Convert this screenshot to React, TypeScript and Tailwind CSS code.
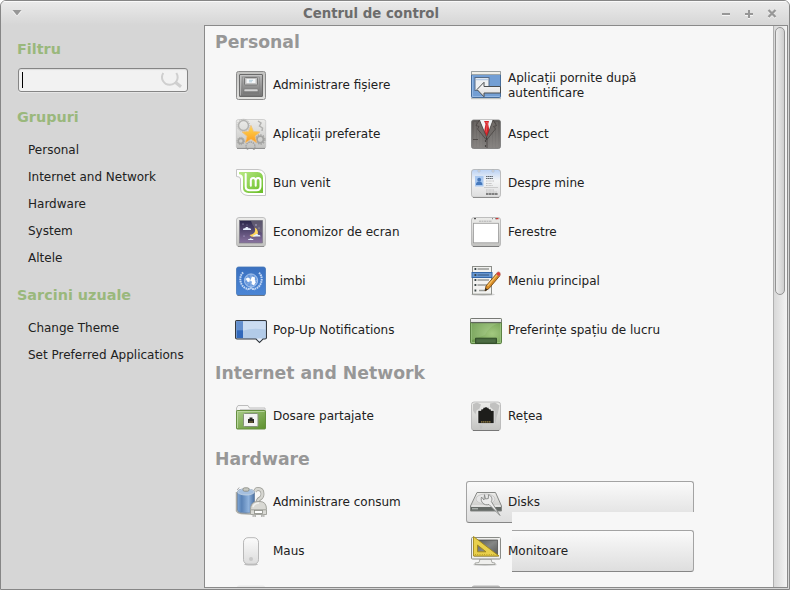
import type { ReactNode } from "react";

const Icon = ({ children }: { children: ReactNode }) => (
  <svg viewBox="0 0 32 32" className="h-8 w-8 shrink-0">{children}</svg>
);

const Gradients = () => (
  <svg className="absolute h-0 w-0">
    <defs>
      <linearGradient id="silver" x1="0" y1="0" x2="0" y2="1"><stop offset="0" stopColor="#ececea" /><stop offset="1" stopColor="#c3c3c1" /></linearGradient>
      <linearGradient id="frame" x1="0" y1="0" x2="0" y2="1"><stop offset="0" stopColor="#c2c2c0" /><stop offset="1" stopColor="#e2e2e0" /></linearGradient>
      <linearGradient id="steel" x1="0" y1="0" x2="0" y2="1"><stop offset="0" stopColor="#b8b8b8" /><stop offset="1" stopColor="#747474" /></linearGradient>
      <linearGradient id="star" x1="0" y1="0" x2="0" y2="1"><stop offset="0" stopColor="#ffda50" /><stop offset="1" stopColor="#fb9b22" /></linearGradient>
      <linearGradient id="mint" x1="0" y1="0" x2="1" y2="1"><stop offset="0" stopColor="#b9e985" /><stop offset="1" stopColor="#69be27" /></linearGradient>
      <linearGradient id="night" x1="0" y1="0" x2="0" y2="1"><stop offset="0" stopColor="#29264a" /><stop offset="1" stopColor="#8a73a0" /></linearGradient>
      <linearGradient id="blue" x1="0" y1="0" x2="0" y2="1"><stop offset="0" stopColor="#3a70bf" /><stop offset="1" stopColor="#4b86d6" /></linearGradient>
      <linearGradient id="green" x1="0" y1="0" x2="1" y2="1"><stop offset="0" stopColor="#a8cc86" /><stop offset="1" stopColor="#5c8f2c" /></linearGradient>
      <radialGradient id="desk" cx=".7" cy=".6" r=".75"><stop offset="0" stopColor="#a3c980" /><stop offset="1" stopColor="#669548" /></radialGradient>
      <linearGradient id="suit" x1="0" y1="0" x2="0" y2="1"><stop offset="0" stopColor="#5c5856" /><stop offset="1" stopColor="#858280" /></linearGradient>
      <linearGradient id="card" x1="0" y1="0" x2="0" y2="1"><stop offset="0" stopColor="#b9d1f4" /><stop offset=".4" stopColor="#f4f5f6" /><stop offset="1" stopColor="#dddddd" /></linearGradient>
      <linearGradient id="tank" x1="0" y1="0" x2="1" y2="0"><stop offset="0" stopColor="#7ba4d4" /><stop offset=".25" stopColor="#5982b6" /><stop offset=".65" stopColor="#8fb2dc" /><stop offset="1" stopColor="#4a70a2" /></linearGradient>
      <linearGradient id="pale" x1="0" y1="0" x2="0" y2="1"><stop offset="0" stopColor="#fbfbfb" /><stop offset="1" stopColor="#dcdcdc" /></linearGradient>
      <linearGradient id="screen" x1="0" y1="0" x2="1" y2="1"><stop offset="0" stopColor="#555755" /><stop offset=".5" stopColor="#858785" /><stop offset="1" stopColor="#555755" /></linearGradient>
    </defs>
  </svg>
);

const CabinetIcon = () => (
  <Icon>
    <rect x="1.5" y="2.5" width="29" height="28" rx="2" fill="url(#frame)" stroke="#8c8c8c" />
    <rect x="4.5" y="5.5" width="23" height="22" rx=".5" fill="url(#steel)" stroke="#6a6a6a" />
    <path d="M5.5 26.5V6.5H26.5" fill="none" stroke="#c8c8c8" strokeWidth=".7" />
    <rect x="7.5" y="8" width="17" height="17" fill="url(#steel)" stroke="#888" strokeWidth=".6" />
    <rect x="9.5" y="8.5" width="13" height="7.5" rx=".8" fill="#c3c3c3" stroke="#777" />
    <rect x="11.5" y="10" width="9" height="4" fill="#f4f6f8" /><path d="M14 11.3h4M14 12.8h3" stroke="#a5c3d2" strokeWidth=".8" />
    <rect x="9" y="20" width="14" height="2.6" rx="1" fill="#d2d2d2" stroke="#777" strokeWidth=".5" />
  </Icon>
);
const StarIcon = () => (
  <Icon>
    <rect x="1.3" y="1.5" width="29.4" height="29" rx="2" fill="url(#silver)" stroke="#bbb" strokeWidth=".6" />
    <path d="M2.5 30.4h27" stroke="#8c8c8c" />
    <g fill="none" stroke="#b2b2b0">
      <circle cx="8.5" cy="7.5" r="5" strokeWidth="1.5" /><circle cx="8.5" cy="7.5" r="6.3" strokeWidth=".8" strokeDasharray="1 1" />
      <g stroke="#a3a3a1"><circle cx="25.2" cy="21.500" r="3.300" strokeWidth="1.800" /><circle cx="25.200" cy="21.500" r="4.700" strokeWidth="1.200" strokeDasharray="1.500 1.200" /><circle cx="5.800" cy="23" r="2.500" strokeWidth="1.500" /><circle cx="5.800" cy="23" r="3.700" strokeWidth="1" strokeDasharray="1.200 1" /><circle cx="15.500" cy="28.500" r="4.500" strokeWidth="1.400" strokeDasharray="1.500 .8" /></g>
      <path d="M23 3l3 2-1.500 3 3 2-.5 3" strokeWidth="1.500" />
    </g>
    <path d="M2 30.500h28" stroke="#929292" />
    <path d="M16 7.5l2.500 6 6.500.500-5 4.200 1.600 6.500-5.600-3.500-5.600 3.500 1.600-6.500L7 14l6.500-.500z" fill="url(#star)" stroke="#f0c07c" strokeWidth=".8" />
  </Icon>
);
const MintIcon = () => (
  <Icon>
    <path d="M1.5 2.5H23Q30.5 3 30.5 11V28.5H13Q6 28 5.5 22V12Q5.5 9.5 1.5 9.5z" fill="#fff" stroke="#c4c4c4" />
    <path d="M4 5H22.5Q28 5.5 28 11V26H13.5Q8 25.5 8 21V11Q8 7.5 4 7.2z" fill="url(#mint)" />
    <path d="M10.700 7v12.500q0 3.800 4 3.800h6.800q4 0 4-4v-5.500q0-2.700-2.400-2.700t-2.400 2.700v5M20.700 13.800q0-2.700-2.500-2.700t-2.400 2.700v5" fill="none" stroke="#fff" strokeWidth="2" strokeLinecap="round" />
  </Icon>
);
const NightIcon = () => (
  <Icon>
    <rect x="1.5" y="1.5" width="29" height="29" rx="2.5" fill="url(#silver)" stroke="#b5b5b5" strokeWidth=".8" />
    <path d="M3 30.5h26" stroke="#8c8c8c" />
    <rect x="4.5" y="4.5" width="23" height="22.5" fill="url(#night)" stroke="#77757e" strokeWidth=".6" />
    <path d="M16 5h11v12Q18 13 16 5" fill="#777080" opacity=".65" />
    <path d="M19.5 11.5c2 4-1 7.3-5 7.4 3.500 4.200 9.300.8 8.300-3.300-.4-2-1.300-3.300-3.300-4.100z" fill="#ffd65c" />
    <g fill="#e4edfa"><path d="M8 14c0-1.500 1-1.800 2-1.600.5-2 3.300-2 3.700 0 1.500-.3 2.400.3 2.300 1.600zM18 20.500c.2-1.300 1-1.500 2-1.400.5-1.600 3-1.500 3.400 0 1.200-.1 2.200.3 2 1.400zM13 24c.1-1 .9-1.100 1.500-1 .5-1.200 2-1.100 2.400 0 .8-.1 1.600.1 1.500 1z" /></g>
    <g fill="#c9c8e8"><circle cx="8" cy="8" r=".6" /><circle cx="21" cy="9" r=".7" /><circle cx="24" cy="12" r=".5" /><circle cx="9" cy="20" r=".6" /><circle cx="12" cy="9" r=".4" /></g>
  </Icon>
);
const UnIcon = () => (
  <Icon>
    <rect x="1.500" y="2" width="29" height="28.300" rx="2" fill="url(#blue)" stroke="#4577b8" strokeWidth=".8" /><path d="M2.500 30.500h27" stroke="#6d7785" />
    <circle cx="16" cy="15.500" r="6.600" fill="#6797db" stroke="#bfd5f5" strokeWidth=".8" />
    <path d="M9.500 15.500h13M16 9v13M11.500 11l9 9M20.500 11l-9 9" stroke="#a9c6ef" strokeWidth=".6" />
    <path d="M10 14l3-1.500 2 1.200-.5 3-2 .2-.5-1.600zM17 11.500l3 1-.2 2.400 1 2.500-2 3-2.300-1.300.5-2.500-1.800-.8z" fill="#fff" />
    <path d="M8.200 7.500C3.800 11 4.500 19.500 9.700 22.700c2 1.500 5 1.500 6.300.5 1.300 1 4.300 1 6.300-.5C27.500 19.500 28.200 11 23.800 7.500" fill="none" stroke="#c5d9f5" strokeWidth="2" strokeDasharray="1.600 .7" />
    <path d="M12 25l4-2 4 2" fill="none" stroke="#bcd4f5" strokeWidth=".8" />
  </Icon>
);
const BubbleIcon = () => (
  <Icon>
    <path d="M2 6.500h28q1.500 0 1.500 1.500v15.500q0 1.500-1.500 1.500h-2l-3.500 3.500-3.500-3.500H2q-1.500 0-1.500-1.500V8q0-1.500 1.500-1.500z" fill="#b2cbe8" stroke="#35393e" strokeWidth="1.100" />
    <path d="M1.500 7.500h29v8q-13-2-22 1h-7z" fill="#cbdcf1" />
    <path d="M1.500 7.500h6.500V24H1.500z" fill="#3168bb" /><path d="M1.500 7.500h6.500v8.800H1.500z" fill="#638fce" />
    <path d="M21.500 24.500h6l-3 3z" fill="#e7edf5" />
  </Icon>
);
const StartupIcon = () => (
  <Icon>
    <rect x="1.500" y="2.500" width="29" height="26" rx=".8" fill="#739fd4" stroke="#466d9b" />
    <path d="M1.500 2.500h29V5.500h-29z" fill="#efefe9" stroke="#999a91" strokeWidth=".7" />
    <path d="M2.500 7v20.500h27" fill="none" stroke="#94b8e3" /><path d="M1 29.700h30" stroke="#b4b8b4" />
    <rect x="5" y="8.500" width="14" height="13" fill="#edf0f2" stroke="#566c87" /><path d="M6 10.500h12" stroke="#b7cce5" strokeWidth="1.500" />
    <path d="M7 20.500l7-7.200v4.200H30.500V24H14v3.800z" fill="url(#pale)" stroke="#4a4e50" />
  </Icon>
);
const SuitIcon = () => (
  <Icon>
    <rect x="1.500" y="2" width="29" height="28.500" rx="2" fill="url(#suit)" stroke="#777" strokeWidth=".8" />
    <path d="M5 4v25M8 4v25M11 15v15M21 15v15M24 5v25M27 4v25" stroke="#96918d" strokeWidth=".45" />
    <path d="M9.500 2h13.500L17 20z" fill="#f2f4f6" />
    <path d="M14 3h5l-.8 3 1.500 8-2.700 5-3-5 1.500-8z" fill="#d4242a" /><path d="M15.500 4.500h2l-1.500 10" fill="none" stroke="#ee6062" strokeWidth=".8" />
    <path d="M9.500 2L6 7.500l3 1-1.500 2.500L16.500 22V19zM23 2l3.500 5.500-3 1 2 2.500L17 21.500l-.5-2z" fill="#716c69" stroke="#3c3836" strokeWidth=".6" />
    <path d="M17 20v10M3 21.500h5" stroke="#3c3836" strokeWidth=".7" /><circle cx="15.500" cy="23" r=".7" fill="#292624" /><circle cx="15.500" cy="28" r=".7" fill="#292624" />
  </Icon>
);
const ProfileIcon = () => (
  <Icon>
    <rect x="1.500" y="2.500" width="29" height="27.800" rx="2.500" fill="url(#card)" stroke="#b0b0b0" strokeWidth=".8" /><path d="M3 30.500h26" stroke="#8c8c8c" />
    <circle cx="9" cy="4" r="1.100" fill="#ededed" stroke="#9ba5b1" strokeWidth=".5" /><circle cx="23" cy="4" r="1.100" fill="#ededed" stroke="#9ba5b1" strokeWidth=".5" />
    <rect x="5" y="9" width="8.500" height="10.500" fill="#a9c8f0" /><circle cx="9.200" cy="12.700" r="1.900" fill="#4777b8" /><path d="M6 18q-.2-3.500 3.200-3.500t3.200 3.500z" fill="#4779bc" />
    <path d="M16 9.500h7M16 11.500h7" stroke="#555b61" strokeWidth=".9" strokeDasharray="1.500 .3" /><path d="M16 14h8M16 16.500h6M16 18.500h7M16 23h8M16 25h11" stroke="#b5b5b5" strokeWidth=".8" strokeDasharray="1 .4" /><path d="M14 20.500h14" stroke="#aaa" strokeWidth=".5" /><path d="M16 27h12" stroke="#606060" strokeWidth="1.700" strokeDasharray="2.500 .4" />
  </Icon>
);
const WindowIcon = () => (
  <Icon>
    <rect x="1.500" y="1.500" width="29" height="29" rx="2.500" fill="url(#silver)" stroke="#b0b0b0" strokeWidth=".8" /><path d="M3 30.500h26" stroke="#7c7c7c" />
    <path d="M4 2.700h2" stroke="#555" strokeWidth="1.200" /><path d="M22 2.700h1M25 2.700h2" stroke="#777" /><path d="M26 2.700h2.500" stroke="#cd3b38" strokeWidth="1.200" /><path d="M9 5.200h13" stroke="#b0b0b0" strokeDasharray="2 .5" />
    <rect x="3.500" y="7.300" width="25" height="19.500" fill="#fff" stroke="#999" strokeWidth=".8" />
  </Icon>
);
const MenuIcon = () => (
  <Icon>
    <ellipse cx="13" cy="29.500" rx="12" ry="1.400" fill="#bbb" opacity=".6" />
    <rect x="2.500" y="1.500" width="19" height="27.700" fill="#f2f2f0" stroke="#8d8f8a" />
    <rect x="2" y="7.500" width="20" height="5" fill="#6898d3" stroke="#3466a5" />
    <path d="M4.500 4h1.800M4.500 10h1.800M4.500 15h1.800M4.500 20h1.800M4.500 25.500h1.800" stroke="#3b4445" strokeWidth="1.800" /><path d="M7.500 4H19M7.500 15H19M7.500 20H19M9 25.500h6" stroke="#999b97" strokeWidth="1.500" /><path d="M7.500 10H19" stroke="#496b96" strokeWidth="1.500" />
    <path d="M15 26l1-5L27 8l3 2.500L19 23.500z" fill="#d88c25" stroke="#754a16" strokeWidth=".9" /><path d="M17.500 21L27 9.800" stroke="#f5bf61" strokeWidth="1.300" /><path d="M26 9l1.500-2q3-.8 3 2.500L29 11.500z" fill="#df3e36" stroke="#b99b91" strokeWidth=".5" /><path d="M15 26l.6-3 2 1.800z" fill="#222" />
  </Icon>
);
const DesktopIcon = () => (
  <Icon>
    <rect x=".6" y="4.600" width="30.800" height="25" rx="1" fill="url(#desk)" stroke="#4f7736" />
    <path d="M1.500 9v19.500h29V9" fill="none" stroke="#9dc584" strokeWidth=".8" />
    <path d="M2 9h28Q20 11 15 21L2 26z" fill="#b8d79f" opacity=".25" />
    <rect x=".5" y="4.500" width="31" height="4" rx="1" fill="url(#pale)" stroke="#777975" /><path d="M1 8.700h30" stroke="#5c6358" />
    <path d="M5.500 29.500v-5.300h21v5.300z" fill="#3e5a34" stroke="#34502b" /><path d="M6.500 25.200h19v3.300h-19z" fill="#4c6c43" />
  </Icon>
);
const FolderIcon = () => (
  <Icon>
    <path d="M1.500 13V8l1.500-2.500h10L14.500 8h15.500v5z" fill="#f5f5f5" stroke="#bdbdbd" />
    <path d="M5 9.500h24" stroke="#ccc" />
    <rect x="1.500" y="10.500" width="29" height="18.500" rx=".7" fill="url(#green)" stroke="#658f3f" /><path d="M2.500 28V11.500h27" fill="none" stroke="#c1dba8" strokeWidth=".8" />
    <rect x="8.500" y="13.500" width="14.500" height="13" rx="1" fill="#f3f3f2" stroke="#85927b" />
    <path d="M13 23v-4h1.500V17.500h3V19H19v4z" fill="#292a26" /><path d="M14 22h4" stroke="#a98f44" strokeWidth=".8" />
  </Icon>
);
const EthernetIcon = () => (
  <Icon>
    <rect x="1.500" y="2" width="29" height="28.500" rx="2.500" fill="url(#silver)" stroke="#b3b3b3" strokeWidth=".8" /><path d="M3 30.500h26" stroke="#777" />
    <path d="M3 4l4-1.500 4 2-1.500 4-3 2-1 4-2.500-4zM20 3.500l5-1 4.500 3-1.500 7-1.500 5-1 6-2-1V10l-3.500-3zM9.500 25l3 .8-.8 3-1.500 1z" fill="#c1c1c0" />
    <path d="M8 23.500V10.500h3V9h2V7.500h1.500V7h3v.8H19V9h2v1.500h3v13z" fill="#1d1d1b" stroke="#f1f1f1" strokeWidth=".6" />
    <path d="M11 21.800h10" stroke="#76663a" strokeWidth="1.800" strokeDasharray="1.500 .5" />
  </Icon>
);
const PowerIcon = () => (
  <Icon>
    <path d="M20 6q.5-3 3-3 4.500 0 4.500 5 0 3-2.500 4.500-2.500 1.500-2.500 4" fill="none" stroke="#989993" strokeWidth="3.800" /><path d="M20 6q.5-3 3-3 4.500 0 4.500 5 0 3-2.500 4.500-2.500 1.500-2.500 4" fill="none" stroke="#d6d6d1" strokeWidth="2.400" />
    <path d="M1.500 6v19q1 2 4.500 2.500l9 .5" fill="none" stroke="#aaaaa4" strokeWidth="1.500" />
    <path d="M2.500 6q0-3 8-3t9 3v18q0 3-8.500 3t-8.500-3z" fill="url(#tank)" stroke="#6a81a0" strokeWidth=".8" />
    <ellipse cx="11" cy="6" rx="8.300" ry="3" fill="#a5bfdf" stroke="#d3dce4" strokeWidth=".7" /><path d="M2.200 4l2-2.500" stroke="#aaa" /><rect x="8" y="1.800" width="6" height="3.400" rx="1.500" fill="#c8c9c1" stroke="#85877e" strokeWidth=".8" />
    <path d="M15.500 28.500v-5q0-8 7.500-8h2q6.500 0 6.500 8v5z" fill="#d9d9d4" stroke="#9b9c95" strokeWidth=".9" /><path d="M18 21q1-4 6-4" fill="none" stroke="#f2f2ef" strokeWidth="1.500" />
    <path d="M16 23.800h15" stroke="#92938c" strokeWidth=".8" /><rect x="19.500" y="24.500" width="8" height="3" fill="#fff" stroke="#888982" strokeWidth=".8" /><path d="M18 31v-2h2.500v2M26.500 31v-2H29v2" fill="#ccc" stroke="#b5b5b0" />
  </Icon>
);
const MouseIcon = () => (
  <Icon><ellipse cx="16" cy="29.300" rx="7" ry="1.300" fill="#bbb" /><rect x="8.500" y="2.700" width="15" height="26.500" rx="4.500" fill="url(#pale)" stroke="#b8b8b8" /><circle cx="16" cy="24" r="2" fill="#c8c8c8" /></Icon>
);
const DiskIcon = () => (
  <Icon>
    <path d="M7 6.500h18.500L31.500 20v5H.5v-5z" fill="url(#silver)" stroke="#868886" /><path d="M1 21h30v3.800H1z" fill="#656a67" /><path d="M2 22.800h6" stroke="#c4cac6" /><path d="M1.500 20h29" stroke="#f6f6f6" />
    <ellipse cx="15.500" cy="13" rx="9.500" ry="5" fill="#e6e6e6" stroke="#c9c9c9" />
    <path d="M14.500 8.700l1 4.300 2.800-.5.200-3.800c3.500 1.300 4 4.500 2.800 6.800L30 29.500l-11-11c-5 1.500-9-2.500-7.500-7.500l2.500 3z" fill="#ebebeb" stroke="#858785" strokeWidth=".9" />
  </Icon>
);
const MonitorIcon = () => (
  <Icon>
    <ellipse cx="15" cy="29.700" rx="12" ry="1.200" fill="#ccc" /><path d="M10 24h11l1 3.500 3 .5v1.500H5V28l4-.5z" fill="#efefed" stroke="#999a96" strokeWidth=".8" />
    <rect x="1.500" y="2.500" width="29" height="21.500" rx="1" fill="#f1f1ef" stroke="#8a8c88" /><rect x="4.500" y="5" width="23" height="16" fill="url(#screen)" stroke="#444" strokeWidth=".7" />
    <path d="M3.500 1.500v19.500h25.500zM7.500 10l8.500 6.800h-8.500z" fill="#e9d04c" fillRule="evenodd" stroke="#a28817" strokeWidth=".9" /><path d="M5 19.500h20" stroke="#b49924" strokeDasharray=".8 1.500" />
  </Icon>
);
const PlateIcon = ({ tone }: { tone: string }) => (
  <Icon><rect x="2" y="2" width="28" height="28" rx="2" fill={tone} stroke={tone} /></Icon>
);

type Entry = { label: ReactNode; icon: ReactNode; plate?: string };

const sections: { title: string; entries: Entry[] }[] = [
  {
    title: "Personal",
    entries: [
      { label: "Administrare fișiere", icon: <CabinetIcon /> },
      { label: <span className="block pt-0.5">Aplicații pornite după<br />autentificare</span>, icon: <StartupIcon /> },
      { label: "Aplicații preferate", icon: <StarIcon /> },
      { label: "Aspect", icon: <SuitIcon /> },
      { label: "Bun venit", icon: <MintIcon /> },
      { label: "Despre mine", icon: <ProfileIcon /> },
      { label: "Economizor de ecran", icon: <NightIcon /> },
      { label: "Ferestre", icon: <WindowIcon /> },
      { label: "Limbi", icon: <UnIcon /> },
      { label: "Meniu principal", icon: <MenuIcon /> },
      { label: "Pop-Up Notifications", icon: <BubbleIcon /> },
      { label: "Preferințe spațiu de lucru", icon: <DesktopIcon /> },
    ],
  },
  {
    title: "Internet and Network",
    entries: [
      { label: "Dosare partajate", icon: <FolderIcon /> },
      { label: "Rețea", icon: <EthernetIcon /> },
    ],
  },
  {
    title: "Hardware",
    entries: [
      { label: "Administrare consum", icon: <PowerIcon /> },
      { label: "Disks", icon: <DiskIcon />, plate: "[clip-path:polygon(0_0,100%_0,100%_31px,46px_31px,46px_100%,0_100%)]" },
      { label: "Maus", icon: <MouseIcon /> },
      { label: "Monitoare", icon: <MonitorIcon />, plate: "[clip-path:inset(0_0_0_46px)]" },
      { label: "", icon: <PlateIcon tone="#e9e9e9" /> },
      { label: "", icon: <PlateIcon tone="#b4b4b4" /> },
    ],
  },
];

const Launcher = ({ label, icon, plate }: Entry) => (
  <div className="relative flex h-[42px] items-center pl-1">
    {plate && (
      <div className={`absolute inset-0 rounded-[3px] border border-[#a3a3a3] border-b-[#868686] bg-linear-to-b from-[#fafafa] to-[#dedede] ${plate}`} />
    )}
    <div className="relative flex items-center gap-1.5">
      {icon}
      <span className="whitespace-nowrap leading-[15px]">{label}</span>
    </div>
  </div>
);

const SideTitle = ({ children }: { children: ReactNode }) => (
  <h2 className="h-5 pl-4 text-[14.4px] leading-5 font-bold text-[#9ab87c]">{children}</h2>
);

const SideList = ({ items }: { items: string[] }) => (
  <ul className="pl-[27px]">
    {items.map((item) => <li key={item} className="h-[27px] leading-[27px] whitespace-nowrap">{item}</li>)}
  </ul>
);

export default function App() {
  return (
    <div className="flex h-[590px] w-[790px] flex-col overflow-hidden rounded-t-md border border-[#868686] bg-[#d6d6d6] font-['DejaVu_Sans',sans-serif] text-[12px] text-[#212121]">
      <Gradients />
      <header className="flex h-6 shrink-0 items-center bg-linear-to-b from-[#ebebeb] to-[#d6d6d6] pr-[11px] pl-[11px] shadow-[inset_0_1px_0_#fafafa]">
        <svg className="h-6 w-[10px]" viewBox="0 0 10 24"><path d="M0 10h10L5 15.500z" fill="#f5f5f5" /><path d="M.5 9h9L5 14.500z" fill="#979797" /></svg>
        <h1 className="flex-1 pt-0.5 pl-[46px] text-center text-[13.3px] leading-6 font-bold text-[#6c6c6c] -ml-[47px]">Centrul de control</h1>
        <svg className="h-6 w-[57px]" viewBox="0 0 57 24" fill="none">
          <g stroke="#f5f5f5" strokeWidth="2"><path d="M1 14h8M24 14h8M28 10v8M47.500 10l7 7M54.500 10l-7 7" /></g>
          <g stroke="#979797" strokeWidth="2"><path d="M1 13h8M24 13h8M28 9v8" /><path d="M47.500 9l7 7M54.500 9l-7 7" strokeWidth="2.300" /></g>
        </svg>
      </header>
      <div className="flex min-h-0 flex-1">
        <aside className="w-[203px] shrink-0 pt-[14px]">
          <SideTitle>Filtru</SideTitle>
          <div className="mt-[9px] ml-[17px] flex h-6 w-[170px] items-center justify-between rounded-[3px] border border-[#858585] bg-[#f2f2f2] pr-1 pl-[3px] shadow-[inset_0_1px_1px_#dcdcdc,0_1px_0_#e6e6e6]">
            <span className="h-4 w-px bg-black" />
            <svg className="h-[18px] w-[22px]" viewBox="0 0 22 18" fill="none" stroke="#cfcfcf">
              <path d="M2.300 2C-1.200 7.500 3 14 9 13.700 15.500 13.500 18.500 7 15.300 2" strokeWidth="2" /><path d="M14 11l6 4.700" strokeWidth="3.200" />
            </svg>
          </div>
          <div className="mt-[15px]"><SideTitle>Grupuri</SideTitle></div>
          <div className="mt-2.5"><SideList items={["Personal", "Internet and Network", "Hardware", "System", "Altele"]} /></div>
          <div className="mt-[13px]"><SideTitle>Sarcini uzuale</SideTitle></div>
          <div className="mt-2.5"><SideList items={["Change Theme", "Set Preferred Applications"]} /></div>
        </aside>
        <div className="mr-px mb-px flex w-[584px] border border-[#8a8a8a] bg-[#f7f7f7]">
          <main className="flex-1 overflow-hidden">
            <div className="-mt-1.5">
              {sections.map((section) => (
                <section key={section.title}>
                  <h2 className="h-11 pl-2.5 text-[17.28px] leading-[45px] font-bold text-[#979797]">{section.title}</h2>
                  <div className="ml-[26px] grid w-[463px] grid-cols-2 gap-[7px]">
                    {section.entries.map((entry, i) => <Launcher key={i} {...entry} />)}
                  </div>
                </section>
              ))}
            </div>
          </main>
          <div className="w-[14px] shrink-0 border-l border-[#b0b0b0] bg-linear-to-r from-[#d8d8d8] to-[#f3f3f3] pt-px pl-px">
            <div className="h-[268px] w-[10px] rounded-[5px] border border-[#939393] bg-linear-to-r from-[#ededed] to-[#cecece]" />
          </div>
        </div>
      </div>
    </div>
  );
}
